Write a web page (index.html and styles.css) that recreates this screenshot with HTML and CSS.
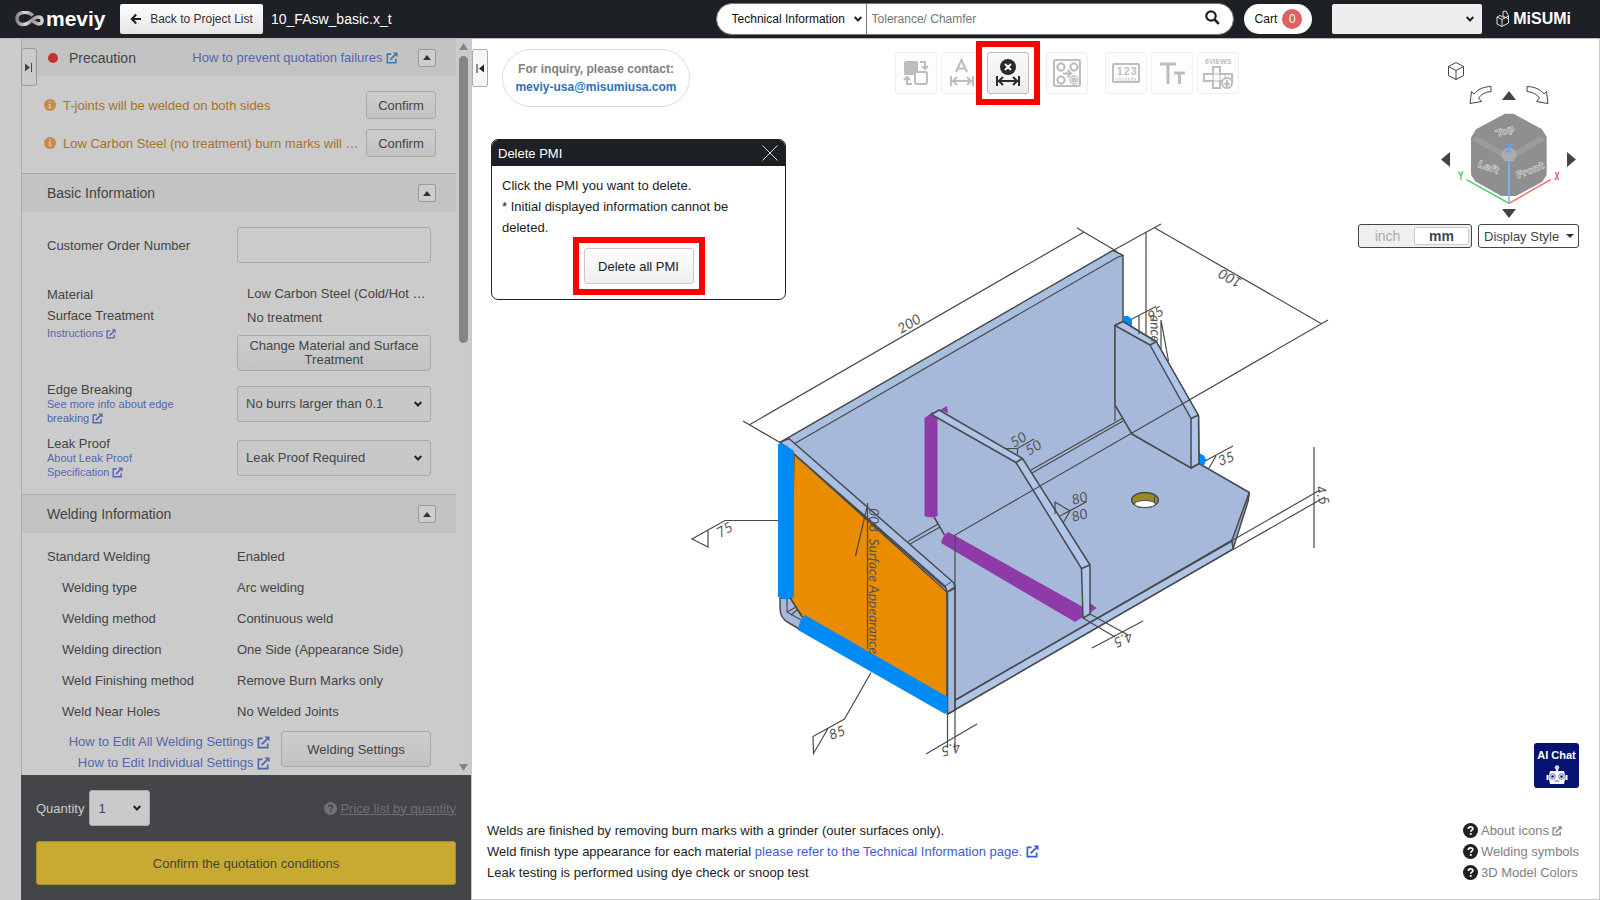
FILE: index.html
```html
<!DOCTYPE html>
<html lang="en">
<head>
<meta charset="UTF-8">
<meta name="viewport" content="width=device-width, initial-scale=1">
<title>meviy - 10_FAsw_basic.x_t</title>
<link rel="stylesheet" href="styles.css">
</head>
<body>

<!-- shared icons -->
<svg class="sprite" width="0" height="0" aria-hidden="true">
  <symbol id="i-ext" viewBox="0 0 14 14">
    <path d="M6 2.5H1.5v10h10V8" fill="none" stroke="currentColor" stroke-width="1.8"/>
    <path d="M5 9l6-6" fill="none" stroke="currentColor" stroke-width="2"/>
    <path d="M8 .5h5.5V6z" fill="currentColor"/>
  </symbol>
  <symbol id="i-info" viewBox="0 0 12 12">
    <circle cx="6" cy="6" r="6" fill="#c98a45"/>
    <path d="M4.6 5h2v3.2h.9v1H4.5v-1h.8V6h-.7zM5.2 2.5h1.5V4H5.2z" fill="#ccc"/>
  </symbol>
  <symbol id="i-help" viewBox="0 0 16 16">
    <circle cx="8" cy="8" r="8" fill="currentColor"/>
    <path class="q" d="M5.7 6.3c0-3 4.8-2.9 4.8-.3 0 1.5-2.2 1.6-2.2 3.2" fill="none" stroke-width="1.8"/>
    <path class="q" d="M8.3 10.7v1.9" stroke-width="2"/>
  </symbol>
  <symbol id="i-up" viewBox="0 0 8 5"><path d="M4 0l4 5H0z" fill="currentColor"/></symbol>
</svg>

<header class="topbar">
  <a class="logo" href="#" aria-label="meviy">
    <svg width="30" height="16" viewBox="0 0 30 16">
      <defs><linearGradient id="lg" x1="0" x2="1"><stop offset="0" stop-color="#8d8487"/><stop offset=".35" stop-color="#dcd7d8"/><stop offset=".6" stop-color="#9b9396"/><stop offset="1" stop-color="#d6d2d3"/></linearGradient></defs>
      <path d="M18 4.500C13-.5 2 .5 2 7.500c0 6.500 7 7.500 12 4C18 8 20 6 23.500 6c4.500 0 5 7 .5 7-3 0-4.500-2-7-3.500" fill="none" stroke="url(#lg)" stroke-width="3.400"/>
    </svg>
    <span>meviy</span>
  </a>
  <button class="back-btn" type="button">
    <svg width="12" height="12" viewBox="0 0 12 12"><path d="M11 6H2M6.200 1.500L1.800 6l4.400 4.500" fill="none" stroke="#222" stroke-width="2"/></svg>
    Back to Project List
  </button>
  <span class="file-name">10_FAsw_basic.x_t</span>

  <form class="search">
    <select aria-label="Search category"><option>Technical Information</option></select>
    <input type="text" placeholder="Tolerance/ Chamfer" aria-label="Search">
    <button type="button" aria-label="Run search">
      <svg width="15" height="15" viewBox="0 0 15 15"><circle cx="6" cy="6" r="4.700" fill="none" stroke="#1d2025" stroke-width="2.200"/><path d="M9.500 9.500l4.300 4.300" stroke="#1d2025" stroke-width="2.600"/></svg>
    </button>
  </form>
  <a class="cart" href="#">Cart <span>0</span></a>
  <select class="account" aria-label="Account"><option></option></select>
  <a class="misumi" href="#" aria-label="MiSUMi">
    <svg width="14" height="18" viewBox="0 0 14 18" fill="none" stroke="#ddd" stroke-width="1"><path d="M1 7l5 2.500v7L1 14zM6 9.500L12.500 6v7L6 16.500M1 7l3-1.500L9 8M7 1.500L7 6l5.500 3M7 1.500l3-.5 2.500 5"/></svg>
    <span>MiSUMi</span>
  </a>
</header>

<div class="workspace">
  <div class="rail"></div>

  <aside class="sidebar">
    <button class="side-tab" type="button" aria-label="Collapse panel">
      <svg width="8" height="9" viewBox="0 0 8 9"><path d="M0 .5l5 4-5 4z" fill="#444"/><path d="M6.500 0v9" stroke="#444"/></svg>
    </button>
    <div class="scroll">
      <div class="sections">
        <section>
          <div class="section-head precaution">
            <i class="dot"></i>
            <h2>Precaution</h2>
            <a href="#">How to prevent quotation failures <svg class="ext teal" width="12" height="12"><use href="#i-ext"/></svg></a>
            <button class="fold" type="button" aria-label="Fold Precaution"><svg width="8" height="5"><use href="#i-up"/></svg></button>
          </div>
          <div class="alerts">
            <div class="alert">
              <svg width="12" height="12"><use href="#i-info"/></svg>
              <span>T-joints will be welded on both sides</span>
              <button class="btn" type="button">Confirm</button>
            </div>
            <div class="alert">
              <svg width="12" height="12"><use href="#i-info"/></svg>
              <span>Low Carbon Steel (no treatment) burn marks will …</span>
              <button class="btn" type="button">Confirm</button>
            </div>
          </div>
        </section>

        <section>
          <div class="section-head">
            <h2>Basic Information</h2>
            <button class="fold" type="button" aria-label="Fold Basic Information"><svg width="8" height="5"><use href="#i-up"/></svg></button>
          </div>
          <div class="fields">
            <div class="field">
              <label for="orderNo">Customer Order Number</label>
              <input id="orderNo" class="text-input" type="text">
            </div>
            <div class="field material">
              <div class="names">
                <div>Material</div>
                <div>Surface Treatment</div>
                <a class="small" href="#">Instructions <svg class="ext" width="10" height="10"><use href="#i-ext"/></svg></a>
              </div>
              <div class="values">
                <div>Low Carbon Steel (Cold/Hot …</div>
                <div>No treatment</div>
                <button class="btn" type="button">Change Material and Surface Treatment</button>
              </div>
            </div>
            <div class="field">
              <div>
                <label for="edge">Edge Breaking</label>
                <a class="small" href="#">See more info about edge breaking <svg class="ext" width="11" height="11"><use href="#i-ext"/></svg></a>
              </div>
              <select id="edge" class="pick"><option>No burrs larger than 0.1</option></select>
            </div>
            <div class="field">
              <div>
                <label for="leak">Leak Proof</label>
                <a class="small" href="#">About Leak Proof Specification <svg class="ext" width="11" height="11"><use href="#i-ext"/></svg></a>
              </div>
              <select id="leak" class="pick"><option>Leak Proof Required</option></select>
            </div>
          </div>
        </section>

        <section>
          <div class="section-head">
            <h2>Welding Information</h2>
            <button class="fold" type="button" aria-label="Fold Welding Information"><svg width="8" height="5"><use href="#i-up"/></svg></button>
          </div>
          <div class="welding">
            <dl>
              <dt class="top">Standard Welding</dt><dd>Enabled</dd>
              <dt>Welding type</dt><dd>Arc welding</dd>
              <dt>Welding method</dt><dd>Continuous weld</dd>
              <dt>Welding direction</dt><dd>One Side (Appearance Side)</dd>
              <dt>Weld Finishing method</dt><dd>Remove Burn Marks only</dd>
              <dt>Weld Near Holes</dt><dd>No Welded Joints</dd>
            </dl>
            <div class="weld-actions">
              <div class="weld-links">
                <a href="#">How to Edit All Welding Settings <svg class="ext" width="13" height="13"><use href="#i-ext"/></svg></a>
                <a href="#">How to Edit Individual Settings <svg class="ext" width="13" height="13"><use href="#i-ext"/></svg></a>
              </div>
              <button class="btn" type="button">Welding Settings</button>
            </div>
          </div>
        </section>
      </div>
      <div class="scrollbar">
        <svg width="9" height="7"><path d="M4.500 0L9 7H0z" fill="#858585"/></svg>
        <div class="thumb"></div>
        <svg width="9" height="7"><path d="M4.500 7L9 0H0z" fill="#858585"/></svg>
      </div>
    </div>

    <div class="order">
      <div class="order-row">
        <label for="qty">Quantity</label>
        <select id="qty" class="pick qty"><option>1</option></select>
        <a href="#"><svg class="help-ico" width="13" height="13"><use href="#i-help"/></svg><span>Price list by quantity</span></a>
      </div>
      <button class="quote-btn" type="button">Confirm the quotation conditions</button>
    </div>
  </aside>

  <main class="viewer">
    <svg class="model" width="650" height="550" viewBox="690 215 650 550" role="img" aria-label="Welded part">
      <g stroke="#4a4a4a" stroke-width="1.500" stroke-linejoin="round">
        <!-- back wall and base -->
        <path d="M780 442.500L1113 250.500l10 5V418l9 16 59 33.500 8-4 50.300 29-16.800 56.500L947.500 714V590L787 448z" fill="#a7b9da"/>
        <path d="M780 442.500L1113 250.500l10 5-5 1.500L787 448z" fill="#a9bfdf" stroke-width="1.200"/>
        <path d="M947.500 704.500L1232 541l1.300 8L947.500 714z" fill="#b0c4e8"/>
        <path d="M1249.300 492.500l-1 8L1233 549l-1-9z" fill="#98aacc"/>
        <path d="M1232 540L948 704.500M1123 418l-92 52M1123 421l-91 52M938 524l-30 17.500M940 527l-30 17M1115 325v96" fill="none" stroke-width="1.200"/>
        <!-- bolt hole -->
        <ellipse cx="1145" cy="500" rx="13.300" ry="7.500" fill="#9c8722"/>
        <ellipse cx="1145" cy="504" rx="10.500" ry="3.500" fill="#fff" stroke-width="1"/>
        <path d="M1154.500 494v9" stroke-width="1"/>
        <!-- far blue welds -->
        <path d="M1123 316h5l4 3v7l-9-5zM1199 453l5 2.500 2 4-2 6.500-5-3z" fill="#008af5" stroke="none"/>
        <!-- right gusset -->
        <path d="M1115 325.500l8-4 33.500 20.500 42 73.500.5 48-8 4.500-59-34-17-29z" fill="#a7b9da"/>
        <path d="M1115 325.500l8-4 33.500 20.500 42 73.500.5 48-8 4.500v-49.500L1150 345z" fill="#b0c5ea"/>
        <path d="M1150 345l6.500-3.500M1191 418.500l7.500-3.500"/>
        <!-- left plate -->
        <path d="M780 598v10c0 7 3 12 9 15l12 7 4-13-11-19z" fill="#a7b9da"/>
        <path d="M787 598v14l16 9M790 598l12 19M787 612l11-6M791 615l7-6" fill="none" stroke-width="1.200"/>
        <path d="M794 454l153 138v114l-144-88-12-19z" fill="#ea8c00"/>
        <path d="M780 442.500l9-4L954 583l1 6-7.500 4-2.500-7L793 453z" fill="#aabfe4"/>
        <path d="M947.500 592l7.500-4v122l-7.500 4z" fill="#a7b9da"/>
        <path d="M945 586l6-4M947 592l7-5M780 443l8 4" fill="none" stroke-width="1"/>
      </g>
      <!-- blue weld beads -->
      <path d="M778 444l4-1 12 8v146q-8 4-16 0z" fill="#008af5"/>
      <path d="M805 615q-6 5-7 15l147 84 2.500-3V697z" fill="#008af5"/>
      <!-- purple weld beads -->
      <g fill="#8e3aa8">
        <path d="M924.500 418l8-6 5 4v100q-6.500 2.500-13 0zM940 410l7-4 1 7z"/>
        <path d="M948.500 532q-6 3-7.500 11l134 79 8-5v-10zM1090 603l6.500 5-6.500 5z"/>
      </g>
      <!-- middle gusset -->
      <g stroke="#4a4a4a" stroke-width="1.500" stroke-linejoin="round" fill="none">
        <path d="M931.500 414.500l7.500-4.500 83.500 48.500L1090 565v49l-7 4-1.500-49.500L1016 462.500z" fill="#b0c5ea"/>
        <path d="M1016 462.500l6.500-4M1081.500 568.500l8.500-3.500M934 517l10.500 18"/>
      </g>
      <!-- dimensions -->
      <g stroke="#4a4a4a" stroke-width="1.200" fill="none">
        <path d="M743 421l37 21.500M749 425l335-193M1077 228l40 23.500M1113 250.500l48-26.500M1155 228l166 95.500M1328 320L955 535v215M1146 232v103M947.500 710v38M926 754l51-30"/>
        <path d="M1314 447v101M1233 540l87-50M1234 549l91-52"/>
        <path d="M778 520.500h-53L692 539l16 8v-17M871 672.500L844.500 719l-31.500 17.500.5 17 14.500-25"/>
        <path d="M867.500 503v146M867.500 505l-12 51"/>
        <path d="M1006 448.500h11.500l16.500-9.500M1017.500 448.500v6M1055 514v-12l15 9-7 12M1060 516l27-14.500"/>
        <path d="M1205 461l28-15M1209 468l7-12M1132 319l24-12.500M1139 315v19M1161 349v-29l7.500 41"/>
        <path d="M1083 618l32 19M1090 614l38 21M1092 648l51-27"/>
      </g>
      <g class="dims">
        <text transform="translate(901 334) rotate(-30)">200</text>
        <text transform="translate(1243 280) rotate(210)">100</text>
        <text transform="translate(720 538) rotate(-30)">75</text>
        <text transform="translate(831 740) rotate(-20)">85</text>
        <text transform="translate(869 508) rotate(90)">008_Surface Appearance</text>
        <text transform="translate(1014 448) rotate(-32)">50</text>
        <text transform="translate(1029 456) rotate(-32)">50</text>
        <text transform="translate(1073 505) rotate(-15)">80</text>
        <text transform="translate(1073 522) rotate(-15)">80</text>
        <text transform="translate(1220 466) rotate(-20)">35</text>
        <text transform="translate(959 742) rotate(165)">4.5</text>
        <text transform="translate(1315 487) rotate(75)">4.5</text>
        <text transform="translate(1130 631) rotate(155)">4.5</text>
        <text transform="translate(1150 315) rotate(88)">ance</text>
        <text transform="translate(1151 322) rotate(-30)">95</text>
      </g>
    </svg>

    <button class="side-tab viewer-tab" type="button" aria-label="Expand viewer">
      <svg width="8" height="9" viewBox="0 0 8 9"><path d="M8 .5l-5 4 5 4z" fill="#222"/><path d="M1 0v9" stroke="#222"/></svg>
    </button>

    <div class="viewer-top">
      <div class="inquiry">
        <span>For inquiry, please contact:</span>
        <a href="#">meviy-usa@misumiusa.com</a>
      </div>

      <div class="toolbar">
        <div class="tools">
          <button type="button" aria-label="Swap faces" disabled>
            <svg width="30" height="30" viewBox="0 0 30 30" fill="#bdbdbd"><rect x="3" y="3" width="14" height="14" rx="2"/><rect x="14" y="14" width="12" height="12" rx="2" fill="#fff" stroke="#bdbdbd" stroke-width="2"/><path d="M19 4h5v6M21 8l3 3 3-3M11 26H6v-7M3 22l3-3 3 3" fill="none" stroke="#bdbdbd" stroke-width="2"/></svg>
          </button>
          <button type="button" aria-label="Add dimension" disabled>
            <svg width="30" height="30" viewBox="0 0 30 30" fill="none" stroke="#bdbdbd" stroke-width="2"><path d="M9 14l5.500-12L20 14M11 10.500h8M4 18v10M26 18v10M5 23h20M10 19l-4 4 4 4M20 19l4 4-4 4"/></svg>
          </button>
          <button class="current marked" type="button" aria-label="Delete PMI">
            <svg width="30" height="30" viewBox="0 0 30 30" fill="none" stroke="#292929" stroke-width="2"><circle cx="15" cy="9" r="8" fill="#292929" stroke="none"/><path d="M12 6l6 6M18 6l-6 6" stroke="#fff"/><path d="M4 18v10M26 18v10M5 23h20M10 19l-4 4 4 4M20 19l4 4-4 4"/></svg>
          </button>
        </div>
        <div class="tools">
          <button type="button" aria-label="Hole groups" disabled>
            <svg width="30" height="30" viewBox="0 0 30 30" fill="none" stroke="#bdbdbd" stroke-width="2"><rect x="2" y="2" width="26" height="26" rx="2"/><circle cx="9" cy="9" r="3.500"/><circle cx="22" cy="9" r="3.500"/><circle cx="9" cy="22" r="3.500"/><circle cx="22" cy="22" r="4" stroke-width="1.300"/><circle cx="22" cy="22" r="1.500"/><path d="M9 4v2M9 12v2M4 9h2M12 9h2M22 4v2M22 12v2M17 9h2M25 9h2M9 17v2M9 25v2M4 22h2M12 22h2" stroke-width="1"/><path d="M11 15.500h8M15.500 12l3.500 3.500-3.500 3.500"/></svg>
          </button>
        </div>
        <div class="tools">
          <button type="button" aria-label="Measure" disabled>
            <svg width="30" height="30" viewBox="0 0 30 30" fill="#bdbdbd"><rect x="2" y="6" width="26" height="18" rx="1" fill="none" stroke="#bdbdbd" stroke-width="2"/><path d="M6 23v-3M9 23v-4M12 23v-3M15 23v-4M18 23v-3M21 23v-4M24 23v-3" stroke="#bdbdbd"/><text x="6" y="17" font-size="10">1</text><text x="13" y="17" font-size="10">2</text><text x="20" y="17" font-size="10">3</text></svg>
          </button>
          <button type="button" aria-label="Text" disabled>
            <svg width="30" height="30" viewBox="0 0 30 30" fill="none" stroke="#bdbdbd" stroke-width="3"><path d="M3 6h16M11 6v20M17 15h11M22.500 15v11"/></svg>
          </button>
          <button type="button" aria-label="6 views" disabled>
            <svg width="32" height="34" viewBox="0 0 32 34" fill="#bdbdbd"><text x="3" y="8" font-size="7">6VIEWS</text><g fill="none" stroke="#bdbdbd" stroke-width="2"><path d="M11 11h7v7h12v7H18v7h-7v-7H2v-7h9z"/><path d="M11 18h7v7h-7zM23 18v7" stroke-width="1"/><circle cx="25" cy="27" r="5" fill="#fff"/><path d="M25 24v5M22.500 27l2.500 2.500 2.500-2.500"/></g></svg>
          </button>
        </div>
      </div>

      <div class="view-panel">
        <div class="view-nav">
          <button class="home" type="button" aria-label="Isometric view"><svg width="18" height="20" viewBox="0 0 18 20" fill="none" stroke="#444"><path d="M9 1.500l7.500 4v9L9 18.500l-7.500-4v-9zM1.500 5.500l7.500 4 7.500-4M9 9.500v9"/></svg></button>
          <div class="nav-row">
            <button type="button" aria-label="Roll left"><svg width="24" height="20" viewBox="0 0 24 20" fill="none" stroke="#444"><path d="M23 1.500v5C17 7 13 9.500 10.500 13l3 3.500-11.500 2 1.500-12 2.500 2.500C10 4 15 2 23 1.500z"/></svg></button>
            <button type="button" aria-label="Rotate up"><svg width="14" height="9"><path d="M7 0l7 9H0z" fill="#444"/></svg></button>
            <button type="button" aria-label="Roll right"><svg width="24" height="20" viewBox="0 0 24 20" fill="none" stroke="#444"><path d="M1 1.500v5C7 7 11 9.500 13.500 13l-3 3.500 11.500 2-1.500-12-2.500 2.500C14 4 9 2 1 1.500z"/></svg></button>
          </div>
          <div class="cube-row">
            <button type="button" aria-label="Rotate left"><svg width="9" height="15"><path d="M0 7.500L9 0v15z" fill="#444"/></svg></button>
            <svg width="108" height="94" viewBox="675 338 324 282">
              <path d="M825 343h25l85 46 15 23v115l-13 20-79 43h-44l-79-44-12-20V415l15-25z" fill="#8f8f8f"/>
              <path d="M738 410l80 44-5 16-85-45zM932 410l-75 44 5 16 84-48z" fill="#9c9c9c"/>
              <path d="M820 452l17-8 19 8 5 16-12 18h-25l-12-18z" fill="#adadad"/>
              <g class="cube-text">
                <text transform="translate(802 414) rotate(-20)">Top</text>
                <text transform="translate(742 502) rotate(20)">Left</text>
                <text transform="translate(864 538) rotate(-22)">Front</text>
              </g>
              <path d="M837 612L710 541" stroke="#3fce60" stroke-width="4"/>
              <path d="M837 612l125-71" stroke="#f06464" stroke-width="4"/>
              <path d="M837 612V468" stroke="#79b7f5" stroke-width="5"/>
              <path d="M829 437l17-2-15 22 14-1" stroke="#5ba5f2" stroke-width="5" fill="none"/>
              <path d="M686 517l7 14 5-15M693 531v10" stroke="#3fce60" stroke-width="4" fill="none"/>
              <path d="M976 518l10 24M987 517l-12 26" stroke="#f06464" stroke-width="4"/>
            </svg>
            <button type="button" aria-label="Rotate right"><svg width="9" height="15"><path d="M9 7.500L0 0v15z" fill="#444"/></svg></button>
          </div>
          <button class="down" type="button" aria-label="Rotate down"><svg width="14" height="9"><path d="M7 9l7-9H0z" fill="#444"/></svg></button>
        </div>
        <div class="view-opts">
          <div class="units">
            <button type="button">inch</button>
            <button class="on" type="button">mm</button>
          </div>
          <select class="display-style" aria-label="Display style"><option>Display Style</option></select>
        </div>
      </div>
    </div>

    <div class="dialog" role="dialog" aria-labelledby="dlgTitle">
      <div class="dialog-head">
        <h3 id="dlgTitle">Delete PMI</h3>
        <button type="button" aria-label="Close"><svg width="16" height="16"><path d="M.5.5l15 15M15.500.5l-15 15" stroke="#ddd"/></svg></button>
      </div>
      <div class="dialog-body">
        <p>Click the PMI you want to delete.<br>* Initial displayed information cannot be deleted.</p>
        <button class="delete-all marked" type="button">Delete all PMI</button>
      </div>
    </div>

    <div class="viewer-bottom">
      <div class="notes">
        <p>Welds are finished by removing burn marks with a grinder (outer surfaces only).</p>
        <p>Weld finish type appearance for each material <a href="#">please refer to the Technical Information page. <svg class="ext" width="13" height="13"><use href="#i-ext"/></svg></a></p>
        <p>Leak testing is performed using dye check or snoop test</p>
      </div>
      <div class="help">
        <button class="ai-chat" type="button">
          AI Chat
          <svg width="22" height="20" viewBox="0 0 22 20"><circle cx="11" cy="2.500" r="2.300" fill="#cfd6ff"/><path d="M10 4h2v2h-2z" fill="#fff"/><path d="M4 6h14l1.500 6L18 19H4l-1.500-7z" fill="#fff"/><path d="M.5 10h2v5h-2zM19.500 10h2v5h-2z" fill="#fff"/><circle cx="6.500" cy="11.500" r="2.800" fill="#fff" stroke="#5f6fc0"/><circle cx="15.500" cy="11.500" r="2.800" fill="#fff" stroke="#5f6fc0"/><circle cx="6.500" cy="11.500" r="1.300" fill="#051274"/><circle cx="15.500" cy="11.500" r="1.300" fill="#051274"/><path d="M8.500 16h5" stroke="#5f6fc0"/></svg>
        </button>
        <ul>
          <li><a href="#"><svg class="help-ico" width="15" height="15"><use href="#i-help"/></svg>About icons <svg class="ext" width="10" height="10"><use href="#i-ext"/></svg></a></li>
          <li><a href="#"><svg class="help-ico" width="15" height="15"><use href="#i-help"/></svg>Welding symbols</a></li>
          <li><a href="#"><svg class="help-ico" width="15" height="15"><use href="#i-help"/></svg>3D Model Colors</a></li>
        </ul>
      </div>
    </div>
  </main>
</div>

</body>
</html>
```
FILE: styles.css
```css
* { box-sizing: border-box; }

body {
  margin: 0;
  height: 100vh;
  display: flex;
  flex-direction: column;
  font-family: "Liberation Sans", Arial, sans-serif;
  font-size: 13px;
  color: #222;
  background: #fff;
}
button, input, select { font: inherit; color: inherit; margin: 0; }
button { padding: 0; cursor: pointer; }
a { text-decoration: none; color: #3b5bdb; }
h2, h3, p, ul, dl, dd { margin: 0; padding: 0; font-weight: normal; }
ul { list-style: none; }
.sprite { position: absolute; }
.q { stroke: var(--mark, #fff); }
select {
  appearance: none;
  background: no-repeat right 8px center url("data:image/svg+xml,%3Csvg xmlns='http://www.w3.org/2000/svg' width='8' height='6'%3E%3Cpath d='M.7 1L4 4.500 7.300 1' fill='none' stroke='%23222' stroke-width='2'/%3E%3C/svg%3E");
}

/* top bar */
.topbar {
  height: 38px;
  flex: none;
  display: flex;
  align-items: center;
  padding: 0 29px 0 15px;
  background: #1d2025;
  color: #fff;
}
.logo { display: flex; align-items: center; gap: 1px; width: 105px; color: #fff; }
.logo span { font-size: 21px; font-weight: bold; line-height: 30px; }
.back-btn {
  display: flex;
  align-items: center;
  justify-content: center;
  gap: 8px;
  width: 143px;
  height: 30px;
  border: 0;
  border-radius: 2px;
  background: linear-gradient(#fff, #e4e4e4);
  color: #333;
  font-size: 12px;
}
.file-name { margin-left: 8px; font-size: 14px; }
.search {
  display: flex;
  width: 518px;
  height: 32px;
  margin-left: auto;
  border: 1px solid #777;
  border-radius: 16px;
  background: #fff;
  color: #111;
  font-size: 12px;
  overflow: hidden;
}
.search select {
  width: 150px;
  padding-left: 15px;
  border: 0;
  border-right: 1px solid #777;
  background-position: right 4px center;
}
.search input { flex: 1; min-width: 0; padding: 0 5px; border: 0; background: none; }
.search input::placeholder { color: #757575; opacity: 1; }
.search button { width: 40px; border: 0; background: none; }
.cart {
  display: flex;
  align-items: center;
  gap: 5px;
  height: 30px;
  margin-left: 10px;
  padding: 0 10px 0 11px;
  border-radius: 15px;
  background: #fff;
  color: #111;
  font-size: 12px;
}
.cart span {
  width: 20px;
  line-height: 20px;
  border-radius: 50%;
  background: #e06060;
  color: #fff;
  text-align: center;
}
.account {
  width: 150px;
  height: 30px;
  margin: 0 14px 0 20px;
  border: 0;
  border-radius: 2px;
  background-color: #eee;
}
.misumi { display: flex; align-items: center; gap: 3px; color: #fff; }
.misumi span { font-size: 16px; font-weight: bold; }

/* layout */
.workspace { flex: 1; display: flex; min-height: 0; border-top: 1px solid #bbb; }
.rail { width: 21px; background: #ccc; }
.sidebar {
  position: relative;
  display: flex;
  flex-direction: column;
  width: 450px;
  background: #cbcbcb;
  color: #444;
}
.sidebar a { color: #5566ab; }
.side-tab {
  position: absolute;
  top: 9px;
  left: 0;
  display: flex;
  align-items: center;
  justify-content: center;
  width: 16px;
  height: 38px;
  border: 1px solid #999;
  border-radius: 3px;
  background: #cacaca;
}
.viewer-tab { top: 10px; border-color: #aaa; background: #f8f8f8; }
.scroll { flex: 1; display: flex; min-height: 0; border-left: 1px solid #aaa; }
.sections { flex: 1; min-width: 0; overflow: hidden; }
.scrollbar {
  width: 15px;
  display: flex;
  flex-direction: column;
  align-items: center;
  gap: 6px;
  padding: 4px 0;
}
.scrollbar .thumb { width: 9px; height: 287px; margin-bottom: auto; border-radius: 5px; background: #858585; }

/* sections */
.section-head {
  display: flex;
  align-items: center;
  height: 39px;
  padding: 0 20px 0 25px;
  border-top: 1px solid #aaaaad;
  background: #c3c3c3;
}
.section-head h2 { font-size: 14px; }
.precaution { height: 37px; border-top: 0; }
.dot { width: 10px; height: 10px; margin: 0 11px 0 1px; border-radius: 50%; background: #c23434; }
.fold {
  display: flex;
  align-items: center;
  justify-content: center;
  width: 18px;
  height: 18px;
  margin-left: auto;
  border: 1px solid #999;
  border-radius: 2px;
  background: #cdcdcd;
  color: #333;
}
.precaution a { margin-left: auto; margin-right: 20px; }
.precaution .fold { margin-left: 0; }
.ext { vertical-align: -2px; }
.teal { color: #3a78ab; }
.btn {
  border: 1px solid #a9a9ad;
  border-radius: 3px;
  background: linear-gradient(#cdcdcd, #c2c2c2);
}
.alerts { display: flex; flex-direction: column; gap: 10px; padding: 15px 20px 16px 22px; }
.alert { display: flex; align-items: center; gap: 7px; color: #a5732a; white-space: nowrap; }
.alert svg { flex: none; }
.alert .btn { width: 70px; height: 28px; margin-left: auto; color: #444; }

.fields { display: flex; flex-direction: column; gap: 11px; padding: 15px 25px; }
.field { display: grid; grid-template-columns: 190px 1fr; align-items: center; line-height: 15px; }
.field label { display: block; }
.small { display: block; width: 140px; font-size: 11px; line-height: 14px; }
.text-input, .pick { width: 100%; height: 36px; border: 1px solid #a9a9ad; border-radius: 3px; background-color: transparent; }
.pick { padding-left: 8px; background-color: #c8c8c8; }
.material { align-items: start; padding-top: 8px; }
.names { padding-top: 2px; line-height: 21px; }
.values { line-height: 24px; white-space: nowrap; }
.values div { padding-left: 10px; }
.values .btn { width: 100%; height: 36px; margin-top: 5px; line-height: 14px; vertical-align: top; white-space: normal; }

.welding { padding: 8px 25px 0; }
.welding dl { display: grid; grid-template-columns: 190px 1fr; line-height: 31px; }
.welding dt { padding-left: 15px; }
.welding dt.top { padding-left: 0; }
.weld-actions { display: flex; align-items: flex-start; justify-content: flex-end; gap: 11px; padding-top: 4px; }
.weld-links { display: flex; flex-direction: column; align-items: flex-end; line-height: 21px; }
.weld-links .ext { vertical-align: -3px; }
.weld-actions .btn { width: 150px; height: 36px; }

/* order footer */
.order { display: flex; flex-direction: column; gap: 15px; padding: 15px; background: #444549; }
.order-row { display: flex; align-items: center; gap: 5px; color: #ccc; }
.order-row a { --mark: #444549; display: flex; align-items: center; gap: 3px; margin-left: auto; color: #707072; }
.order-row a span { text-decoration: underline; }
.qty { width: 61px; padding-left: 8px; color: #444; background-color: #cacaca; }
.quote-btn { height: 44px; border: 1px solid #a88f2e; border-radius: 3px; background: #c8aa32; color: #444; }

/* viewer */
.viewer {
  position: relative;
  flex: 1;
  display: flex;
  flex-direction: column;
  justify-content: space-between;
  min-width: 0;
  border: 1px solid #c8c8cc;
  border-top: 0;
}
.model { position: absolute; left: 218px; top: 176px; }
.dims { font: italic 14px Lato, sans-serif; fill: #555; }
.viewer-top { position: relative; display: flex; align-items: flex-start; padding: 10px 20px 0 30px; }
.viewer-tab { z-index: 1; }
.inquiry {
  display: flex;
  flex-direction: column;
  align-items: center;
  justify-content: center;
  width: 188px;
  height: 58px;
  border: 1px solid #ddd;
  border-radius: 29px;
  font-size: 12px;
  font-weight: bold;
  line-height: 18px;
  color: #808080;
}
.inquiry a { color: #2b72b8; }
.toolbar { display: flex; gap: 17px; margin: 3px 0 0 205px; }
.tools { display: flex; gap: 4px; }
.tools button {
  display: flex;
  align-items: center;
  justify-content: center;
  width: 42px;
  height: 42px;
  border: 1px solid #eee;
  border-radius: 3px;
  background: #fdfdfd;
  font-weight: bold;
}
.tools .current { border-color: #bbb; background: linear-gradient(#fafafa, #ececec); }

/* red frame round a button */
.marked { position: relative; }
.marked::after {
  content: "";
  position: absolute;
  inset: -12px;
  border: 6px solid #f00;
}

.view-panel { display: flex; flex-direction: column; align-items: flex-end; margin: 12px 0 0 auto; }
.view-panel button { border: 0; background: none; line-height: 0; }
.view-nav { width: 135px; margin-right: 3px; display: flex; flex-direction: column; }
.home { align-self: flex-start; margin-left: 6px; }
.nav-row { display: flex; align-items: center; justify-content: center; gap: 10px; margin-top: 4px; }
.cube-row { display: flex; align-items: center; justify-content: space-between; margin-top: 7px; }
.cube-text { font: bold 29px "DejaVu Sans", sans-serif; fill: #8f8f8f; stroke: #d2d2d2; stroke-width: 2px; }
.down { align-self: center; margin-top: 3px; }
.view-opts { display: flex; gap: 6px; margin-top: 6px; }
.units {
  display: flex;
  width: 114px;
  height: 24px;
  padding: 2px;
  border: 1px solid #444;
  border-radius: 3px;
  background: #efefef;
}
.view-panel .units button { flex: 1; font-size: 14px; color: #aaa; }
.view-panel .units .on { border: 1px solid #ccc; border-radius: 2px; background: #fff; color: #444; font-weight: bold; }
.display-style {
  width: 101px;
  height: 24px;
  padding-left: 5px;
  border: 1px solid #444;
  border-radius: 3px;
  color: #444;
  background-position: right 4px center;
  background-image: url("data:image/svg+xml,%3Csvg xmlns='http://www.w3.org/2000/svg' width='8' height='4'%3E%3Cpath d='M0 0h8L4 4z' fill='%23333'/%3E%3C/svg%3E");
}

/* floating dialog */
.dialog {
  position: absolute;
  left: 19px;
  top: 100px;
  width: 295px;
  border: 1px solid #1d2025;
  border-radius: 7px;
  background: #fff;
  overflow: hidden;
}
.dialog-head { display: flex; align-items: center; justify-content: space-between; height: 26px; padding: 0 7px 0 6px; background: #1d2025; color: #fff; }
.dialog-head h3 { font-size: 13px; }
.dialog-head button { display: flex; border: 0; background: none; }
.dialog-body { display: flex; flex-direction: column; align-items: center; padding: 9px 10px 15px; line-height: 21px; }
.dialog-body p { align-self: stretch; }
.delete-all {
  width: 110px;
  height: 36px;
  margin-top: 10px;
  border: 1px solid #c8c8d0;
  border-radius: 3px;
  background: linear-gradient(#fff, #efefef);
}

/* notes and help */
.viewer-bottom { position: relative; display: flex; align-items: flex-end; justify-content: space-between; padding: 0 20px 16px 15px; line-height: 21px; }
.help { display: flex; flex-direction: column; align-items: flex-end; gap: 32px; }
.help a { display: flex; align-items: center; gap: 3px; color: #808080; }
.help .help-ico { color: #1d2025; }
.ai-chat {
  display: flex;
  flex-direction: column;
  align-items: center;
  justify-content: center;
  gap: 1px;
  width: 45px;
  height: 45px;
  border: 0;
  border-radius: 3px;
  background: #051274;
  color: #fff;
  font-size: 11px;
  font-weight: bold;
  line-height: 18px;
}
```
